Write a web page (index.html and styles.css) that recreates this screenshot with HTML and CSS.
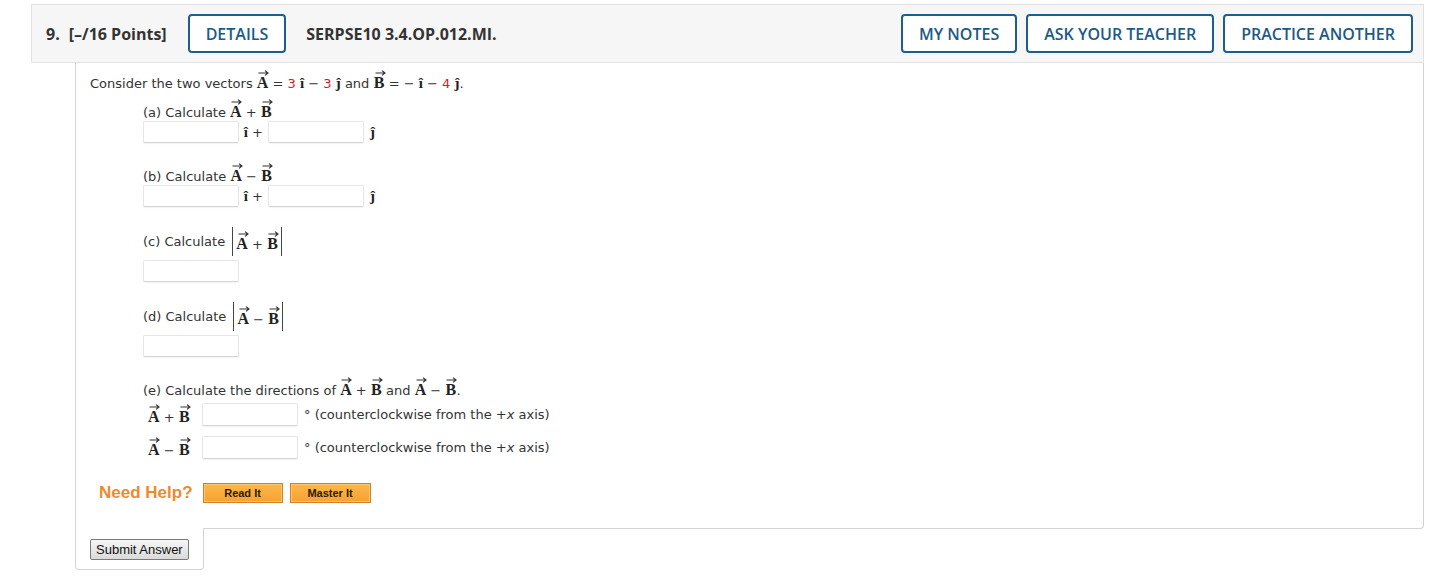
FILE: index.html
```html
<!DOCTYPE html>
<html lang="en">
<head>
<meta charset="utf-8">
<title>Question 9</title>
<link rel="stylesheet" href="styles.css">
</head>
<body>
<div class="wrap">
  <div class="qhead">
    <div class="qtitle"><span class="qnum">9.</span>[–/16 Points]</div>
    <button class="hbtn">DETAILS</button>
    <div class="qcode">SERPSE10 3.4.OP.012.MI.</div>
    <div class="hright">
      <button class="hbtn">MY NOTES</button>
      <button class="hbtn">ASK YOUR TEACHER</button>
      <button class="hbtn">PRACTICE ANOTHER</button>
    </div>
  </div>

  <div class="qbody">
    <div class="intro">Consider the two vectors <span class="vec"><svg class="arr" width="11" height="6" viewBox="0 0 11 6"><path d="M0.5 3H10M7 0.6L10 3L7 5.4" /></svg><b>A</b></span> <span class="op">=</span> <span class="red">3</span> <b class="u">î</b> <span class="op">−</span> <span class="red">3</span> <b class="u">ĵ</b> and <span class="vec"><svg class="arr" width="11" height="6" viewBox="0 0 11 6"><path d="M0.5 3H10M7 0.6L10 3L7 5.4" /></svg><b>B</b></span> <span class="op">=</span> <span class="op">−</span> <b class="u">î</b> <span class="op">−</span> <span class="red">4</span> <b class="u">ĵ</b>.</div>

    <div class="part">
      <div class="plabel">(a) Calculate <span class="vec"><svg class="arr" width="11" height="6" viewBox="0 0 11 6"><path d="M0.5 3H10M7 0.6L10 3L7 5.4" /></svg><b>A</b></span> <span class="op">+</span> <span class="vec"><svg class="arr" width="11" height="6" viewBox="0 0 11 6"><path d="M0.5 3H10M7 0.6L10 3L7 5.4" /></svg><b>B</b></span></div>
      <div class="irow">
        <input class="ans" type="text">
        <span class="unit"><b class="u">î</b> +</span>
        <input class="ans" type="text">
        <span class="unit j"><b class="u">ĵ</b></span>
      </div>
    </div>

    <div class="part gap">
      <div class="plabel">(b) Calculate <span class="vec"><svg class="arr" width="11" height="6" viewBox="0 0 11 6"><path d="M0.5 3H10M7 0.6L10 3L7 5.4" /></svg><b>A</b></span> <span class="op">−</span> <span class="vec"><svg class="arr" width="11" height="6" viewBox="0 0 11 6"><path d="M0.5 3H10M7 0.6L10 3L7 5.4" /></svg><b>B</b></span></div>
      <div class="irow">
        <input class="ans" type="text">
        <span class="unit"><b class="u">î</b> +</span>
        <input class="ans" type="text">
        <span class="unit j"><b class="u">ĵ</b></span>
      </div>
    </div>

    <div class="part gap">
      <div class="plabel tall">(c) Calculate <span class="abs"><span class="vec"><svg class="arr" width="11" height="6" viewBox="0 0 11 6"><path d="M0.5 3H10M7 0.6L10 3L7 5.4" /></svg><b>A</b></span> <span class="op">+</span> <span class="vec"><svg class="arr" width="11" height="6" viewBox="0 0 11 6"><path d="M0.5 3H10M7 0.6L10 3L7 5.4" /></svg><b>B</b></span></span></div>
      <div class="irow single"><input class="ans" type="text"></div>
    </div>

    <div class="part gap">
      <div class="plabel tall">(d) Calculate <span class="abs"><span class="vec"><svg class="arr" width="11" height="6" viewBox="0 0 11 6"><path d="M0.5 3H10M7 0.6L10 3L7 5.4" /></svg><b>A</b></span> <span class="op">−</span> <span class="vec"><svg class="arr" width="11" height="6" viewBox="0 0 11 6"><path d="M0.5 3H10M7 0.6L10 3L7 5.4" /></svg><b>B</b></span></span></div>
      <div class="irow single"><input class="ans" type="text"></div>
    </div>

    <div class="part gap">
      <div class="plabel">(e) Calculate the directions of <span class="vec"><svg class="arr" width="11" height="6" viewBox="0 0 11 6"><path d="M0.5 3H10M7 0.6L10 3L7 5.4" /></svg><b>A</b></span> <span class="op">+</span> <span class="vec"><svg class="arr" width="11" height="6" viewBox="0 0 11 6"><path d="M0.5 3H10M7 0.6L10 3L7 5.4" /></svg><b>B</b></span> and <span class="vec"><svg class="arr" width="11" height="6" viewBox="0 0 11 6"><path d="M0.5 3H10M7 0.6L10 3L7 5.4" /></svg><b>A</b></span> <span class="op">−</span> <span class="vec"><svg class="arr" width="11" height="6" viewBox="0 0 11 6"><path d="M0.5 3H10M7 0.6L10 3L7 5.4" /></svg><b>B</b></span>.</div>
      <div class="drow first">
        <span class="dlabel"><span class="vec"><svg class="arr" width="11" height="6" viewBox="0 0 11 6"><path d="M0.5 3H10M7 0.6L10 3L7 5.4" /></svg><b>A</b></span> <span class="op">+</span> <span class="vec"><svg class="arr" width="11" height="6" viewBox="0 0 11 6"><path d="M0.5 3H10M7 0.6L10 3L7 5.4" /></svg><b>B</b></span></span>
        <input class="ans" type="text">
        <span class="deg">° (counterclockwise from the +<i>x</i> axis)</span>
      </div>
      <div class="drow">
        <span class="dlabel"><span class="vec"><svg class="arr" width="11" height="6" viewBox="0 0 11 6"><path d="M0.5 3H10M7 0.6L10 3L7 5.4" /></svg><b>A</b></span> <span class="op">−</span> <span class="vec"><svg class="arr" width="11" height="6" viewBox="0 0 11 6"><path d="M0.5 3H10M7 0.6L10 3L7 5.4" /></svg><b>B</b></span></span>
        <input class="ans" type="text">
        <span class="deg">° (counterclockwise from the +<i>x</i> axis)</span>
      </div>
    </div>

    <div class="help">
      <span class="needhelp">Need Help?</span>
      <button class="hlp read">Read It</button>
      <button class="hlp master">Master It</button>
    </div>
  </div>

  <div class="submit-tab">
    <button class="submit">Submit Answer</button>
  </div>
</div>
</body>
</html>
```

FILE: styles.css
```css
* { box-sizing: border-box; }

body {
  margin: 0;
  background: #fff;
  color: #333;
  font-family: "DejaVu Sans", Verdana, sans-serif;
}

.wrap {
  width: 1393px;
  margin: 4px 0 0 31px;
}

/* header */
.qhead {
  height: 59px;
  display: flex;
  align-items: center;
  background: #f6f6f6;
  border: 1px solid #e2e2e2;
  padding: 0 10px 0 14px;
  font-family: "Open Sans", sans-serif;
}
.qtitle {
  font-size: 16px;
  font-weight: 700;
  color: #333;
  margin-right: 21px;
}
.qnum { margin-right: 9px; }
.qcode {
  font-size: 16px;
  font-weight: 700;
  color: #333;
  margin-left: 20px;
}
.hright {
  margin-left: auto;
  display: flex;
  gap: 9px;
}
.hbtn {
  height: 39px;
  padding: 0 16px;
  border: 2px solid #1d5e8e;
  border-radius: 4px;
  background: #fff;
  color: #1b5a87;
  font-family: "Open Sans", sans-serif;
  font-size: 16px;
  font-weight: 600;
  cursor: pointer;
}

/* body */
.qbody {
  margin-left: 44px;
  border: 1px solid #d4d4d4;
  border-top: none;
  border-bottom-right-radius: 4px;
  padding: 7px 14px 25px 14px;
  font-size: 13px;
}

.intro {
  height: 24px;
  line-height: 24px;
}

.vec {
  display: inline-block;
  text-align: center;
  line-height: 1;
  vertical-align: baseline;
}
.vec .arr {
  display: block;
  margin: 0 auto 1px;
  position: relative;
  left: 1px;
}
.vec .arr path {
  stroke: #333;
  stroke-width: 1.2;
  fill: none;
}
.vec b {
  display: block;
  font-family: "Liberation Serif", "Times New Roman", serif;
  font-weight: 700;
  font-size: 16px;
  line-height: 12px;
  color: #222;
}
.u {
  font-family: "Liberation Serif", "Times New Roman", serif;
  font-weight: 700;
  font-size: 15px;
  color: #222;
}
.red { color: #cc1f1f; }
.op { color: #333; }

.part {
  margin-left: 53px;
  margin-top: 5px;
}
.part.gap { margin-top: 20px; }

.plabel {
  display: block;
  height: 22px;
  line-height: 22px;
  white-space: pre;
}
.plabel.tall {
  height: 30px;
  line-height: 30px;
}

.abs {
  display: inline-block;
  border-left: 1px solid #444;
  border-right: 1px solid #444;
  padding: 0 3px;
  margin-left: 3px;
  height: 29px;
  line-height: 36px;
  vertical-align: middle;
  margin-top: -3px;
}

.irow {
  display: flex;
  align-items: center;
  height: 22px;
}
.irow.single { margin-top: 3px; }

.ans {
  width: 96px;
  height: 22px;
  border: 1px solid #e6e6e6;
  border-bottom-color: #d6d6d6;
  border-radius: 2px;
  box-shadow: 0 1px 1px rgba(0, 0, 0, 0.05);
  background: #fff;
  margin: 0;
  padding: 0 4px;
  font-size: 13px;
}
.unit {
  margin: 0 5px 0 4px;
  width: 20px;
  text-align: right;
}
.unit.j {
  margin-left: 6px;
  width: auto;
}

.drow {
  display: flex;
  align-items: center;
  height: 23px;
  margin-top: 10px;
}
.drow.first { margin-top: 4px; }
.dlabel {
  width: 59px;
  padding-left: 5px;
  white-space: pre;
}
.drow .ans { height: 23px; }
.deg {
  margin-left: 6px;
}

.help {
  display: flex;
  align-items: center;
  height: 20px;
  margin-top: 24px;
  padding-left: 9px;
}
.needhelp {
  font-family: "Liberation Sans", Arial, sans-serif;
  font-weight: 700;
  font-size: 17px;
  color: #ef8a2c;
  margin-right: 10px;
}
.hlp {
  height: 20px;
  border: 1px solid #d27f28;
  box-shadow: inset 0 0 0 1px #fbc870;
  background: linear-gradient(#fbb748, #f6a230);
  font-family: "Liberation Sans", Arial, sans-serif;
  font-weight: 700;
  font-size: 11px;
  color: #2a1a08;
  padding: 0;
  cursor: pointer;
}
.read { width: 80px; margin-right: 7px; }
.master { width: 81px; }

.submit-tab {
  margin-left: 44px;
  margin-top: -1px;
  width: 129px;
  height: 42px;
  background: #fff;
  border: 1px solid #d4d4d4;
  border-top: none;
  border-radius: 0 0 4px 4px;
  padding: 11px 0 0 14px;
}
.submit {
  height: 21px;
  padding: 0 5px;
  border: 1px solid #7a7a7a;
  border-radius: 2px;
  background: linear-gradient(#f6f6f6, #dadada);
  font-family: "Liberation Sans", Arial, sans-serif;
  font-size: 13px;
  color: #111;
}
```
